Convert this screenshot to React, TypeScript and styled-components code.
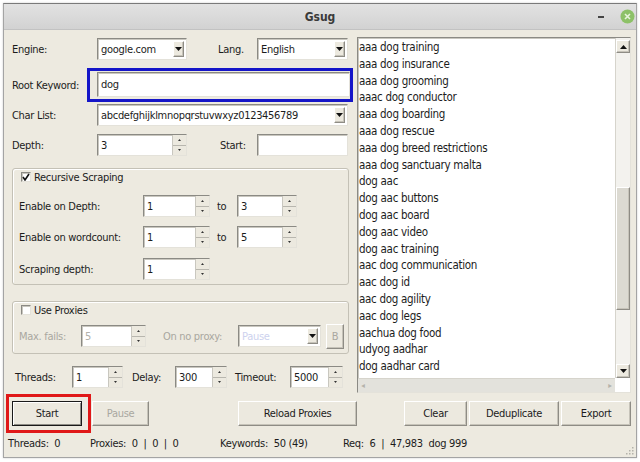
import React from "react";
import styled, { createGlobalStyle, css } from "styled-components";

const keywords = [
  "aaa dog training",
  "aaa dog insurance",
  "aaa dog grooming",
  "aaac dog conductor",
  "aaa dog boarding",
  "aaa dog rescue",
  "aaa dog breed restrictions",
  "aaa dog sanctuary malta",
  "dog aac",
  "dog aac buttons",
  "dog aac board",
  "dog aac video",
  "dog aac training",
  "aac dog communication",
  "aac dog id",
  "aac dog agility",
  "aac dog legs",
  "aachua dog food",
  "udyog aadhar",
  "dog aadhar card",
];

const GlobalStyle = createGlobalStyle`
  html, body {
    margin: 0;
    padding: 0;
    background: #ffffff;
  }
  body {
    font-family: "DejaVu Sans Condensed", "DejaVu Sans", sans-serif;
    font-stretch: condensed;
    font-size: 11px;
    letter-spacing: -0.3px;
    color: #1c1c1c;
  }
`;

const sunken = css`
  box-sizing: border-box;
  background: #ffffff;
  border: 1px solid;
  border-color: #8b8a84 #e4e2da #e4e2da #8b8a84;
  box-shadow: inset 1px 1px 0 #c9c7bf;
`;

const raised = css`
  box-sizing: border-box;
  background: #ece9df;
  border: 1px solid;
  border-color: #ffffff #8e8c85 #8e8c85 #ffffff;
  box-shadow: inset -1px -1px 0 #c6c3b9;
`;

const Window = styled.div`
  margin: 3px;
  width: 634px;
  height: 455px;
  box-sizing: border-box;
  border: 1px solid #a4a4a4;
  border-top-color: #7a7a7a;
  background: #edeae0;
  display: flex;
  flex-direction: column;
  box-shadow: 0 0 2px rgba(0, 0, 0, 0.2);
`;

const TitleBar = styled.div`
  height: 25px;
  display: grid;
  grid-template-columns: 1fr auto 1fr;
  align-items: center;
  background: linear-gradient(#e2e2e2, #d2d2d2);
  border-bottom: 1px solid #c2c2c2;
`;

const Title = styled.div`
  grid-column: 2;
  font-size: 12px;
  font-weight: bold;
  color: #3a3a3a;
  letter-spacing: 0;
`;

const WindowControls = styled.div`
  grid-column: 3;
  justify-self: end;
  display: flex;
  align-items: center;
  gap: 16px;
  padding-right: 1px;
`;

const MinimizeMark = styled.div`
  width: 6px;
  height: 2px;
  background: #444;
`;

const Body = styled.div`
  padding: 7px 5px 0 8px;
  display: flex;
  flex-direction: column;
`;

const Main = styled.div`
  display: flex;
  height: 356px;
  gap: 4px;
`;

const LeftPanel = styled.div`
  width: 341px;
  display: flex;
  flex-direction: column;
`;

const FormRow = styled.div<{ $top: number; $h?: number; $pl?: number }>`
  display: flex;
  align-items: center;
  height: ${(p) => p.$h ?? 22}px;
  margin-top: ${(p) => p.$top}px;
  padding-left: ${(p) => p.$pl ?? 0}px;
`;

const Label = styled.span<{ $w: number; $ml?: number; $disabled?: boolean }>`
  width: ${(p) => p.$w}px;
  margin-left: ${(p) => p.$ml ?? 0}px;
  flex-shrink: 0;
  white-space: nowrap;
  color: ${(p) => (p.$disabled ? "#a9a79f" : "#1c1c1c")};
`;

const Field = styled.div<{ $w: number; $h?: number; $disabled?: boolean }>`
  ${sunken};
  width: ${(p) => p.$w}px;
  height: ${(p) => p.$h ?? 22}px;
  display: flex;
  align-items: center;
  padding-left: 3px;
  flex-shrink: 0;
  color: ${(p) => (p.$disabled ? "#b3b1aa" : "#1c1c1c")};
`;

const FieldText = styled.span<{ $faint?: boolean }>`
  flex: 1;
  white-space: nowrap;
  overflow: hidden;
  color: ${(p) => (p.$faint ? "#cdd2ee" : "inherit")};
`;

const ComboArrow = styled.div`
  ${raised};
  width: 11px;
  height: 16px;
  margin-right: 2px;
  display: flex;
  align-items: center;
  justify-content: center;
`;

const SpinButtons = styled.div`
  width: 13px;
  height: 100%;
  display: flex;
  flex-direction: column;
  border-left: 1px solid #c9c7bf;
  background: #ece9df;
`;

const SpinHalf = styled.div<{ $bottom?: boolean }>`
  flex: 1;
  display: flex;
  align-items: center;
  justify-content: center;
  border-top: ${(p) => (p.$bottom ? "1px solid #b8b6ae" : "none")};
`;

const KeywordHighlight = styled.div`
  margin-left: 75px;
  width: 266px;
  height: 34px;
  box-sizing: border-box;
  border: 3px solid #1515c8;
  padding: 1px 1px 2px 7px;
  display: flex;
`;

const Group = styled.div<{ $top: number; $h: number }>`
  margin-top: ${(p) => p.$top}px;
  height: ${(p) => p.$h}px;
  width: 337px;
  box-sizing: border-box;
  border: 1px solid #c4c1b6;
  box-shadow: inset 1px 1px 0 #ffffff;
  border-radius: 3px;
  padding: 2px 0 0 6px;
  display: flex;
  flex-direction: column;
`;

const GroupTitle = styled.div`
  display: flex;
  align-items: center;
  gap: 3px;
  height: 12px;
  margin-left: 2px;
`;

const CheckBox = styled.div`
  ${sunken};
  width: 10px;
  height: 10px;
  display: flex;
  align-items: center;
  justify-content: center;
`;

const PushButton = styled.div<{ $w: number; $ml?: number; $disabled?: boolean; $default?: boolean }>`
  ${raised};
  width: ${(p) => p.$w}px;
  height: 25px;
  margin-left: ${(p) => p.$ml ?? 0}px;
  flex-shrink: 0;
  display: flex;
  align-items: center;
  justify-content: center;
  color: ${(p) => (p.$disabled ? "#a9a79f" : "#1c1c1c")};
  ${(p) =>
    p.$default &&
    css`
      border: 1px solid #1a1a1a;
      box-shadow: inset 1px 1px 0 #ffffff, inset -1px -1px 0 #8e8c85;
    `}
`;

const ListBox = styled.div`
  ${sunken};
  width: 274px;
  height: 356px;
  display: grid;
  grid-template-columns: 1fr 15px;
  grid-template-rows: 1fr 14px;
`;

const ListItems = styled.div`
  padding: 1px 0 0 1px;
  font-size: 11.5px;
  line-height: 16.8px;
  overflow: hidden;
`;

const VScroll = styled.div`
  display: flex;
  flex-direction: column;
  background: #f3f2ee;
  border-left: 1px solid #d6d4cc;
`;

const ScrollArrow = styled.div<{ $h: number }>`
  ${raised};
  height: ${(p) => p.$h}px;
  flex-shrink: 0;
  display: flex;
  align-items: center;
  justify-content: center;
`;

const TrackGap = styled.div<{ $h?: number }>`
  flex: ${(p) => (p.$h ? `0 0 ${p.$h}px` : "1")};
`;

const Thumb = styled.div`
  ${raised};
  height: 123px;
  background: #dcdad2;
`;

const HScroll = styled.div`
  display: flex;
  align-items: stretch;
  background: #e3e2dc;
  border-top: 1px solid #d6d4cc;
`;

const HArrow = styled.div`
  width: 10px;
  display: flex;
  align-items: center;
  justify-content: center;
  color: #b5b3ab;
  font-size: 8px;
`;

const Corner = styled.div`
  background: #ffffff;
`;

const ButtonRow = styled.div`
  display: flex;
  align-items: center;
  margin-top: 8px;
  height: 25px;
`;

const RedFrame = styled.div`
  border: 3px solid #e01818;
  padding: 4px 6px 4px 3px;
  margin: -7px 0 -7px -6px;
  display: flex;
`;

const StatusBar = styled.div`
  margin-top: 9px;
  height: 17px;
  display: flex;
  align-items: center;
  padding-left: 4px;
  position: relative;
`;

const StatusItem = styled.span<{ $w: number }>`
  width: ${(p) => p.$w}px;
  flex-shrink: 0;
  white-space: pre;
`;

const Grip = styled.svg`
  position: absolute;
  right: 2px;
  bottom: -3px;
`;

const Tri = ({ up, color = "#111" }: { up?: boolean; color?: string }) => (
  <svg width="7" height="4" viewBox="0 0 7 4">
    <path d={up ? "M0 4 L3.5 0 L7 4 Z" : "M0 0 L7 0 L3.5 4 Z"} fill={color} />
  </svg>
);

const SmallTri = ({ up }: { up?: boolean }) => (
  <svg width="3" height="2" viewBox="0 0 3 2">
    <path d={up ? "M0 2 L1.5 0 L3 2 Z" : "M0 0 L3 0 L1.5 2 Z"} fill="#333" />
  </svg>
);

const Combo = ({ w, value, faint }: { w: number; value: string; faint?: boolean }) => (
  <Field $w={w}>
    <FieldText $faint={faint}>{value}</FieldText>
    <ComboArrow>
      <Tri />
    </ComboArrow>
  </Field>
);

const Spin = ({ w, value, disabled }: { w: number; value: string; disabled?: boolean }) => (
  <Field $w={w} $disabled={disabled}>
    <FieldText>{value}</FieldText>
    <SpinButtons>
      <SpinHalf>
        <SmallTri up />
      </SpinHalf>
      <SpinHalf $bottom>
        <SmallTri />
      </SpinHalf>
    </SpinButtons>
  </Field>
);

const Check = ({ checked }: { checked?: boolean }) => (
  <CheckBox>
    {checked && (
      <svg width="8" height="8" viewBox="0 0 8 8">
        <path d="M1 4 L3 7 L7 1" stroke="#111" strokeWidth="1.6" fill="none" />
      </svg>
    )}
  </CheckBox>
);

export default function App() {
  return (
    <>
      <GlobalStyle />
      <Window>
        <TitleBar>
          <Title>Gsug</Title>
          <WindowControls>
            <MinimizeMark />
            <svg width="15" height="15" viewBox="0 0 15 15">
              <circle cx="7.5" cy="7.5" r="7" fill="#8dc168" />
              <path d="M5 5 L10 10 M10 5 L5 10" stroke="#e8f4dc" strokeWidth="1.6" />
            </svg>
          </WindowControls>
        </TitleBar>
        <Body>
          <Main>
            <LeftPanel>
              <FormRow $top={1}>
                <Label $w={85}>Engine:</Label>
                <Combo w={90} value="google.com" />
                <Label $w={39} $ml={31}>
                  Lang.
                </Label>
                <Combo w={91} value="English" />
              </FormRow>
              <FormRow $top={8} $h={34}>
                <Label $w={0}>Root Keyword:</Label>
                <KeywordHighlight>
                  <Field $w={253} $h={25}>
                    <FieldText>dog</FieldText>
                  </Field>
                </KeywordHighlight>
              </FormRow>
              <FormRow $top={2}>
                <Label $w={85}>Char List:</Label>
                <Combo w={251} value="abcdefghijklmnopqrstuvwxyz0123456789" />
              </FormRow>
              <FormRow $top={8}>
                <Label $w={85}>Depth:</Label>
                <Spin w={90} value="3" />
                <Label $w={37} $ml={33}>
                  Start:
                </Label>
                <Field $w={91} />
              </FormRow>

              <Group $top={12} $h={117}>
                <GroupTitle>
                  <Check checked />
                  <span>Recursive Scraping</span>
                </GroupTitle>
                <FormRow $top={12}>
                  <Label $w={124}>Enable on Depth:</Label>
                  <Spin w={67} value="1" />
                  <Label $w={20} $ml={7}>
                    to
                  </Label>
                  <Spin w={60} value="3" />
                </FormRow>
                <FormRow $top={9}>
                  <Label $w={124}>Enable on wordcount:</Label>
                  <Spin w={67} value="1" />
                  <Label $w={20} $ml={7}>
                    to
                  </Label>
                  <Spin w={60} value="5" />
                </FormRow>
                <FormRow $top={10}>
                  <Label $w={124}>Scraping depth:</Label>
                  <Spin w={67} value="1" />
                </FormRow>
              </Group>

              <Group $top={16} $h={53}>
                <GroupTitle>
                  <Check />
                  <span>Use Proxies</span>
                </GroupTitle>
                <FormRow $top={9}>
                  <Label $w={62} $disabled>
                    Max. fails:
                  </Label>
                  <Spin w={65} value="5" disabled />
                  <Label $w={75} $ml={17} $disabled>
                    On no proxy:
                  </Label>
                  <Combo w={83} value="Pause" faint />
                  <PushButton $w={18} $ml={5} $disabled>
                    B
                  </PushButton>
                </FormRow>
              </Group>

              <FormRow $top={12} $pl={3}>
                <Label $w={57}>Threads:</Label>
                <Spin w={51} value="1" />
                <Label $w={43} $ml={9}>
                  Delay:
                </Label>
                <Spin w={52} value="300" />
                <Label $w={55} $ml={8}>
                  Timeout:
                </Label>
                <Spin w={53} value="5000" />
              </FormRow>
            </LeftPanel>

            <ListBox>
              <ListItems>
                {keywords.map((k) => (
                  <div key={k}>{k}</div>
                ))}
              </ListItems>
              <VScroll>
                <TrackGap $h={2} />
                <ScrollArrow $h={13}>
                  <Tri up />
                </ScrollArrow>
                <TrackGap $h={134} />
                <Thumb />
                <TrackGap />
                <ScrollArrow $h={14}>
                  <Tri />
                </ScrollArrow>
              </VScroll>
              <HScroll>
                <HArrow>◂</HArrow>
                <TrackGap />
                <HArrow>▸</HArrow>
              </HScroll>
              <Corner />
            </ListBox>
          </Main>

          <ButtonRow>
            <RedFrame>
              <PushButton $w={70} $default>
                Start
              </PushButton>
            </RedFrame>
            <PushButton $w={57} $ml={1} $disabled>
              Pause
            </PushButton>
            <PushButton $w={119} $ml={89}>
              Reload Proxies
            </PushButton>
            <PushButton $w={63} $ml={47}>
              Clear
            </PushButton>
            <PushButton $w={90} $ml={2}>
              Deduplicate
            </PushButton>
            <PushButton $w={70} $ml={2}>
              Export
            </PushButton>
          </ButtonRow>
        </Body>

        <StatusBar>
          <StatusItem $w={82}>Threads:  0</StatusItem>
          <StatusItem $w={130}>Proxies:  0  |  0  |  0</StatusItem>
          <StatusItem $w={123}>Keywords:  50 (49)</StatusItem>
          <StatusItem $w={170}>Req:  6  |  47,983  dog 999</StatusItem>
          <Grip width="8" height="8" viewBox="0 0 8 8">
            <g fill="#b4b2aa">
              <rect x="6" y="0" width="1.5" height="1.5" />
              <rect x="3" y="3" width="1.5" height="1.5" />
              <rect x="6" y="3" width="1.5" height="1.5" />
              <rect x="0" y="6" width="1.5" height="1.5" />
              <rect x="3" y="6" width="1.5" height="1.5" />
              <rect x="6" y="6" width="1.5" height="1.5" />
            </g>
          </Grip>
        </StatusBar>
      </Window>
    </>
  );
}
